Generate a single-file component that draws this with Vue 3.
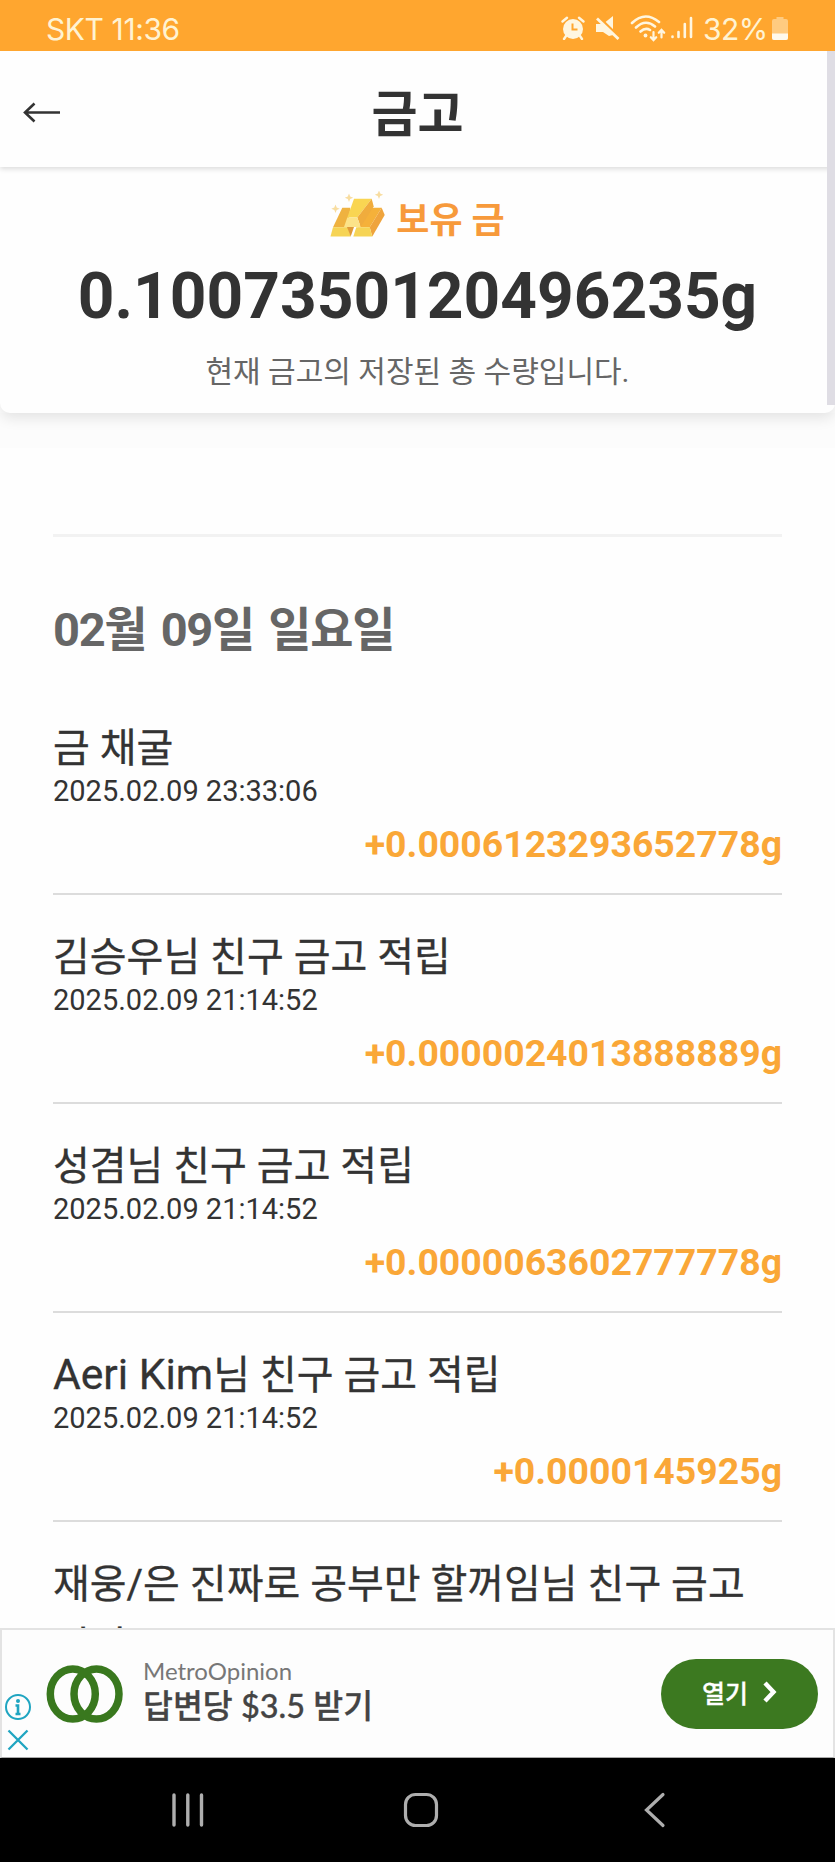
<template>
  <div class="phone">
    <header class="status">
      <span class="carrier">SKT 11:36</span>
      <div class="status-icons">
        <svg class="alarm" width="24" height="24" viewBox="0 0 24 24">
          <circle cx="12" cy="13" r="10" fill="#fff6e0" />
          <path d="M1.5 5.5 6 1.8M22.5 5.5 18 1.8M5 20l-2 3M19 20l2 3" stroke="#fff6e0" stroke-width="2.4" stroke-linecap="round" />
          <path d="M11.5 7.5v6h5" fill="none" stroke="#ffa62f" stroke-width="2" />
        </svg>
        <svg class="mute" width="24" height="24" viewBox="0 0 24 24">
          <path d="M0 8h7l10-8v19l-4 1-6-4H0z" fill="#fff6e0" />
          <path d="M2 .5 24 22" stroke="#ffa62f" stroke-width="3" />
          <path d="M1 2.5 22.5 23" stroke="#fff6e0" stroke-width="2.8" />
        </svg>
        <svg class="wifi" width="36" height="28" viewBox="0 0 36 28" fill="none" stroke="#fff6e0" stroke-width="2.6" stroke-linecap="round">
          <path d="M2 9Q15-3.5 29 8M6 13.5Q15.5 4.5 25 12.5M10.5 17.5Q15.5 13 20 16" />
          <circle cx="15.5" cy="21.5" r="1.9" fill="#fff6e0" stroke="none" />
          <path d="M23.5 18v8M20.8 23.2l2.7 3 2.7-3M31.5 23.5v-7M28.8 18.8l2.7-3 2.7 3" stroke-width="2.2" />
        </svg>
        <svg class="signal" width="22" height="24" viewBox="0 0 22 24" stroke="#fff6e0" stroke-width="2.6" stroke-linecap="round">
          <path d="M1.5 20.5v.5M7.5 16v5M13.800 8v13M20 2v19" />
        </svg>
        <span class="percent">32%</span>
        <svg class="battery" width="18" height="25" viewBox="0 0 18 25">
          <path d="M3 3h2.5V1h7v2H15q2 0 2 2v17q0 2-2 2H3q-2 0-2-2V5q0-2 2-2z" fill="#ffcb80" />
          <path d="M1 17.5h16V22q0 2-2 2H3q-2 0-2-2z" fill="#fff9ec" />
        </svg>
      </div>
    </header>

    <main class="screen">
      <div class="topbar">
        <svg class="back" width="40" height="24" viewBox="0 0 40 24" fill="none" stroke="#333" stroke-width="2.6">
          <path d="M38 11.5H3M12.5 2.5 3 11.5l9.5 9" />
        </svg>
        <h1>금고</h1>
      </div>

      <section class="summary">
        <div class="label">
          <svg width="56" height="48" viewBox="0 0 56 48">
            <path d="M12.3 16.7h8L18 36.3H3z" fill="#efb240" />
            <path d="M3 36.3h15l2.7 9.2H.5z" fill="#f6d455" />
            <path d="M17 36h7l-3.3 9.5z" fill="#e09a38" />
            <path d="M40 16.7h11.7l-12 19.6H28z" fill="#f5b13a" />
            <path d="M51.7 16.7 54.7 24 42.3 45.5l-2.6-9.2z" fill="#efa43d" />
            <path d="M26.3 36.3h13.4l2.6 9.2h-19z" fill="#f6d455" />
            <path d="M24 7.7h17.7L27.3 26.5h-10z" fill="#f9d552" />
            <path d="M41.7 7.7 43.7 15.5 30.7 36l-3.4-9.5z" fill="#f0ac3d" />
            <path d="M17.3 26.5h10l3.4 9.5H14z" fill="#fce389" />
            <path d="M5.5 13.5l1.2 3 3 1.2-3 1.2-1.2 3-1.2-3-3-1.2 3-1.2zM19 2.5l1.2 3 3 1.2-3 1.2-1.2 3-1.2-3-3-1.2 3-1.2zM49-.5l1.2 3 3 1.2-3 1.2-1.2 3-1.2-3-3-1.2 3-1.2z" fill="#f8dda0" />
          </svg>
          <span>보유 금</span>
        </div>
        <strong class="total">0.1007350120496235g</strong>
        <p>현재 금고의 저장된 총 수량입니다.</p>
      </section>

      <section class="history">
        <h2>02월 09일 일요일</h2>
        <article v-for="(item, index) in items" :key="index" class="row">
          <div class="title"><span v-if="item.name" class="latin">{{ item.name }}</span>{{ item.title }}</div>
          <time v-if="item.time">{{ item.time }}</time>
          <div v-if="item.amount" class="amount">{{ item.amount }}</div>
        </article>
      </section>
      <i class="scrollbar"></i>
    </main>

    <aside class="ad">
      <div class="ad-tools">
        <svg width="26" height="26" viewBox="0 0 26 26" fill="none" stroke="#1fa5c1">
          <circle cx="13" cy="13" r="12" stroke-width="2" />
          <circle cx="13" cy="7" r="2" fill="#1fa5c1" stroke="none" />
          <path d="M10.5 11.5H13V20M10.5 20h5" stroke-width="2.6" />
        </svg>
        <svg width="22" height="22" viewBox="0 0 22 22" stroke="#1fa5c1" stroke-width="2.3">
          <path d="M1.5 1.5l19 19M20.5 1.5l-19 19" />
        </svg>
      </div>
      <svg class="ad-logo" width="78" height="58" viewBox="0 0 78 58" fill="none" stroke="#39781e" stroke-width="7.5">
        <ellipse cx="26.8" cy="29" rx="22.5" ry="25" />
        <ellipse cx="50.5" cy="29" rx="22.5" ry="25" />
      </svg>
      <div class="ad-text">
        <span class="brand">MetroOpinion</span>
        <span class="headline">답변당 $3.5 받기</span>
      </div>
      <button class="open">
        <span>열기</span>
        <svg width="14" height="22" viewBox="0 0 14 22" fill="none" stroke="#fff" stroke-width="4.4">
          <path d="M2 2l8.5 9L2 20" />
        </svg>
      </button>
    </aside>

    <nav class="navbar">
      <svg width="36" height="36" viewBox="0 0 36 36" stroke="#aeaeae" stroke-width="3.4" stroke-linecap="round">
        <path d="M4 3v30M17.8 3v30M31.5 3v30" />
      </svg>
      <svg width="36" height="36" viewBox="0 0 36 36" fill="none" stroke="#aeaeae" stroke-width="3.2">
        <rect x="2.5" y="2.5" width="31" height="31" rx="10" />
      </svg>
      <svg width="36" height="36" viewBox="0 0 36 36" fill="none" stroke="#aeaeae" stroke-width="3.2" stroke-linecap="round">
        <path d="M27 2.5 10.5 18 27 33.5" />
      </svg>
    </nav>
  </div>
</template>

<script setup>
import { ref } from "vue";

// 금고 적립 내역
const items = ref([
  { title: "금 채굴", time: "2025.02.09 23:33:06", amount: "+0.0006123293652778g" },
  { title: "김승우님 친구 금고 적립", time: "2025.02.09 21:14:52", amount: "+0.0000024013888889g" },
  { title: "성겸님 친구 금고 적립", time: "2025.02.09 21:14:52", amount: "+0.0000063602777778g" },
  { name: "Aeri Kim", title: "님 친구 금고 적립", time: "2025.02.09 21:14:52", amount: "+0.0000145925g" },
  { title: "재웅/은 진짜로 공부만 할꺼임님 친구 금고 적립" },
]);
</script>

<style>
body {
  margin: 0;
  background: #000;
}
</style>

<style scoped>
* {
  box-sizing: border-box;
}

.phone {
  display: flex;
  flex-direction: column;
  width: 835px;
  height: 1862px;
  overflow: hidden;
  background: #fefefe;
  color: #333;
  font-family: Roboto, "Noto Sans CJK KR", sans-serif;
}

svg {
  display: block;
  flex: none;
}

h1,
h2,
p {
  margin: 0;
}

.status {
  display: flex;
  flex: none;
  justify-content: space-between;
  height: 51px;
  padding: 9px 46px 0 46px;
  background: #ffa62f;
  color: #fff3d2;
  font-family: Inter, sans-serif;
  font-size: 30px;
  line-height: 40px;
}

.carrier {
  letter-spacing: -0.4px;
}

.status-icons {
  display: flex;
  align-items: flex-start;
}

.status-icons svg {
  margin-top: 7px;
}

.status-icons .mute {
  margin-left: 11px;
}

.status-icons .wifi {
  margin: 5px 0 0 10px;
}

.signal {
  margin-left: 5px;
}

.percent {
  width: 64px;
  margin: 0 4px 0 10px;
  letter-spacing: -0.6px;
}

.screen {
  position: relative;
  flex: none;
  height: 1577px;
  overflow: hidden;
}

.topbar {
  position: relative;
  display: flex;
  align-items: center;
  height: 116px;
  padding-left: 22px;
  background: #fefefe;
  box-shadow: 0 2px 5px rgba(0, 0, 0, 0.14);
  z-index: 2;
}

.back {
  margin-top: 7px;
}

h1 {
  flex: 1;
  padding-right: 62px;
  margin-top: 12px;
  font-size: 50px;
  line-height: 60px;
  text-align: center;
}

.summary {
  position: relative;
  display: flex;
  flex-direction: column;
  align-items: center;
  height: 246px;
  padding-top: 24px;
  border-radius: 0 0 10px 10px;
  background: #fefefe;
  box-shadow: 0 5px 14px rgba(0, 0, 0, 0.1);
  z-index: 1;
}

.label {
  display: flex;
  gap: 10px;
  height: 54px;
  color: #f79a3b;
  font-size: 36px;
  font-weight: 700;
  line-height: 60px;
}

.total {
  margin-top: 12px;
  font-size: 64px;
  line-height: 80px;
}

.summary p {
  margin-top: 13px;
  color: #666;
  font-size: 30px;
  line-height: 44px;
}

.history {
  margin-top: 35px;
  padding: 86px 53px 0;
  background: #fefefe;
  box-shadow: 0 -35px 0 #fcfcfc;
}

h2 {
  height: 152px;
  padding-top: 63px;
  border-top: 3px solid #f2f2f2;
  color: #666;
  font-size: 47px;
  letter-spacing: -1.3px;
  line-height: 60px;
  word-spacing: 4px;
}

.row {
  height: 209px;
  padding-top: 32px;
  border-bottom: 2px solid #dcdcdc;
}

.title {
  font-size: 40px;
  line-height: 62px;
  -webkit-text-stroke: 0.3px #333;
}

.latin {
  font-size: 42.6px;
  line-height: 1;
}

time {
  display: block;
  margin-top: -3px;
  font-size: 29px;
  line-height: 28px;
}

.amount {
  margin-top: 17px;
  color: #faa737;
  font-size: 37.4px;
  font-weight: 700;
  line-height: 44px;
  text-align: right;
}

.scrollbar {
  position: absolute;
  top: 0;
  right: 0;
  width: 8px;
  height: 354px;
  background: #dfdde4;
  z-index: 3;
}

.ad {
  position: relative;
  display: flex;
  flex: none;
  align-items: center;
  height: 130px;
  padding: 0 15px 0 44px;
  border: 2px solid #e3e3e3;
  border-bottom: 1px solid #aaa;
  background: #fdfdfd;
}

.ad-tools {
  position: absolute;
  left: 3px;
  bottom: 6px;
  display: flex;
  flex-direction: column;
  align-items: center;
  gap: 9px;
}

.ad-text {
  display: flex;
  flex: 1;
  flex-direction: column;
  margin-left: 19px;
  padding-bottom: 5px;
}

.brand {
  color: #777;
  font-family: Lato, sans-serif;
  font-size: 24px;
  line-height: 29px;
}

.headline {
  color: #444;
  font-family: Lato, "Noto Sans CJK KR", sans-serif;
  font-size: 32.5px;
  font-weight: 500;
  line-height: 42px;
  -webkit-text-stroke: 0.3px #444;
}

.open {
  display: flex;
  align-items: center;
  justify-content: center;
  gap: 15px;
  width: 157px;
  height: 70px;
  padding: 0 0 3px;
  border: 0;
  border-radius: 35px;
  background: #3c7920;
  color: #fff;
  font-family: Roboto, "Noto Sans CJK KR", sans-serif;
  font-size: 25px;
  font-weight: 500;
  -webkit-text-stroke: 0.3px #fff;
}

.navbar {
  display: flex;
  flex: 1;
  align-items: center;
  justify-content: space-between;
  padding: 0 163px 0 170px;
  background: #000;
}
</style>
